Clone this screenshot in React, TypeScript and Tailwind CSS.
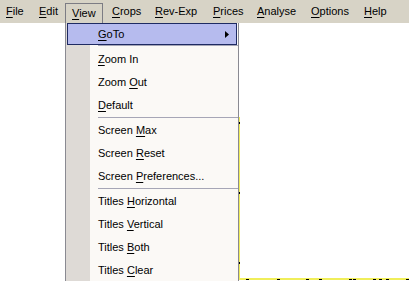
import React from 'react';

const font = { fontFamily: '"Liberation Sans", Arial, sans-serif' };

type Item = { label: string; key: number };

// label with the mnemonic letter underlined
function Mnemonic({ label, at }: { label: string; at: number }) {
  return (
    <span>
      {label.slice(0, at)}
      <span className="underline underline-offset-2">{label[at]}</span>
      {label.slice(at + 1)}
    </span>
  );
}

const topMenus = [
  { label: 'File', at: 0, cls: 'w-[33px] pl-[6px]' },
  { label: 'Edit', at: 0, cls: 'w-[32px] pl-[6px]' },
  { label: 'View', at: 0, cls: 'view' },
  { label: 'Crops', at: 0, cls: 'w-[46px] pl-[9px]' },
  { label: 'Rev-Exp', at: 0, cls: 'w-[58px] pl-[6px]' },
  { label: 'Prices', at: 0, cls: 'w-[44px] pl-[6px]' },
  { label: 'Analyse', at: 0, cls: 'w-[54px] pl-[6px]' },
  { label: 'Options', at: 0, cls: 'w-[53px] pl-[6px]' },
  { label: 'Help', at: 0, cls: 'w-[40px] pl-[6px]' },
];

const groups: Item[][] = [
  [
    { label: 'Zoom In', key: 0 },
    { label: 'Zoom Out', key: 5 },
    { label: 'Default', key: 0 },
  ],
  [
    { label: 'Screen Max', key: 7 },
    { label: 'Screen Reset', key: 7 },
    { label: 'Screen Preferences...', key: 7 },
  ],
  [
    { label: 'Titles Horizontal', key: 7 },
    { label: 'Titles Vertical', key: 7 },
    { label: 'Titles Both', key: 7 },
    { label: 'Titles Clear', key: 7 },
  ],
];

const bottomTicks = [6, 37, 66, 79, 109, 113, 133, 139, 146, 166];
const sideTicks = [5, 75, 145];

export default function App() {
  return (
    <div className="relative w-[409px] h-[281px] overflow-hidden bg-white text-[11px] text-black" style={font}>
      {/* Menu bar */}
      <div className="flex h-[23px] bg-[#d7d3c6]">
        {topMenus.map((m) =>
          m.cls === 'view' ? (
            <div
              key={m.label}
              className="mt-[3px] h-[20px] w-[38px] border-t border-l border-r border-[#7c7c84] pl-[6px] leading-[19px]"
            >
              <Mnemonic label={m.label} at={m.at} />
            </div>
          ) : (
            <div key={m.label} className={`${m.cls} leading-[23px] whitespace-nowrap`}>
              <Mnemonic label={m.label} at={m.at} />
            </div>
          )
        )}
      </div>

      {/* Window behind the menu */}
      <div className="pt-[94px] pl-[239px]">
        <div className="relative h-[163px] border-l border-b-2 border-[#f0ee5a]">
          {sideTicks.map((y) => (
            <span key={y} className="absolute left-[-1px] w-px h-[2px] bg-black" style={{ top: y }} />
          ))}
          {bottomTicks.map((x) => (
            <span key={x} className="absolute bottom-[-2px] w-[3px] h-px bg-black" style={{ left: x }} />
          ))}
        </div>
      </div>

      {/* View dropdown */}
      <div className="absolute left-[65px] top-[23px] w-[174px] h-[270px] border-l border-r border-[#8a8a92] bg-[linear-gradient(to_right,#dedad6_24px,#fbf9f6_24px)]">
        <div className="relative mx-[1px] h-[22px] border border-[#1e2a62] bg-[#b6bbee] pl-[30px] leading-[20px]">
          <Mnemonic label="GoTo" at={0} />
          <svg className="absolute right-[7px] top-[7px]" width="4" height="7" viewBox="0 0 4 7">
            <path d="M0 0L4 3.5L0 7Z" fill="#000" />
          </svg>
        </div>
        <div className="ml-[32px] h-[3px] border-t border-[#a6a6b6]" />
        {groups.map((g, gi) => (
          <div key={gi}>
            {gi > 0 && <div className="ml-[32px] h-[2px] border-t border-[#a6a6b6]" />}
            {g.map((it) => (
              <div key={it.label} className="h-[23px] pl-[32px] leading-[23px] whitespace-nowrap">
                <Mnemonic label={it.label} at={it.key} />
              </div>
            ))}
          </div>
        ))}
      </div>
    </div>
  );
}
